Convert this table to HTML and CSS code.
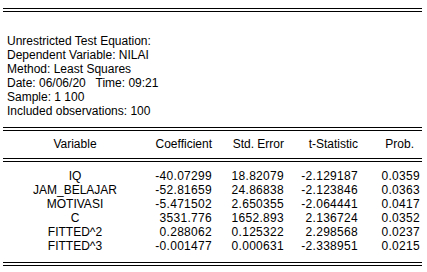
FILE: index.html
```html
<!DOCTYPE html>
<html>
<head>
<meta charset="utf-8">
<link rel="stylesheet" href="styles.css">
</head>
<body>
<div class="page">
  <div class="rule rule-top"></div>
  <div class="info">
    <div>Unrestricted Test Equation:</div>
    <div>Dependent Variable: NILAI</div>
    <div>Method: Least Squares</div>
    <div>Date: 06/06/20&nbsp;&nbsp; Time: 09:21</div>
    <div>Sample: 1 100</div>
    <div>Included observations: 100</div>
  </div>
  <div class="rule rule-table"></div>
  <div class="grid head">
    <div class="var">Variable</div>
    <div class="num">Coefficient</div>
    <div class="num">Std. Error</div>
    <div class="num">t-Statistic</div>
    <div class="num prob-head">Prob.</div>
  </div>
  <div class="rule rule-head"></div>
  <div class="grid body">
    <div class="var">IQ</div><div class="num val">-40.07299</div><div class="num val">18.82079</div><div class="num val">-2.129187</div><div class="num val">0.0359</div>
    <div class="var">JAM_BELAJAR</div><div class="num val">-52.81659</div><div class="num val">24.86838</div><div class="num val">-2.123846</div><div class="num val">0.0363</div>
    <div class="var">MOTIVASI</div><div class="num val">-5.471502</div><div class="num val">2.650355</div><div class="num val">-2.064441</div><div class="num val">0.0417</div>
    <div class="var">C</div><div class="num val">3531.776</div><div class="num val">1652.893</div><div class="num val">2.136724</div><div class="num val">0.0352</div>
    <div class="var">FITTED^2</div><div class="num val">0.288062</div><div class="num val">0.125322</div><div class="num val">2.298568</div><div class="num val">0.0237</div>
    <div class="var">FITTED^3</div><div class="num val">-0.001477</div><div class="num val">0.000631</div><div class="num val">-2.338951</div><div class="num val">0.0215</div>
  </div>
  <div class="rule rule-bottom"></div>
</div>
</body>
</html>
```

FILE: styles.css
```css
html, body {
  margin: 0;
  padding: 0;
  background: #ffffff;
}
body {
  font-family: "Liberation Sans", Arial, sans-serif;
  font-size: 12px;
  line-height: 14px;
  color: #000000;
}
.page {
  width: 419px;
  padding-left: 3px;
  overflow: hidden;
  height: 272px;
}
.rule {
  height: 2px;
  border-top: 1px solid #000;
  border-bottom: 1px solid #000;
}
.rule-top { margin-top: 8px; }
.info {
  margin-top: 22px;
  padding-left: 4px;
  white-space: nowrap;
}
.rule-table { margin-top: 9px; }
.grid {
  display: grid;
  grid-template-columns: 144px 67px 72px 74px 62px;
}
.head { margin-top: 6px; }
.rule-head { margin-top: 7px; }
.body { margin-top: 7px; }
.rule-bottom { margin-top: 9px; }
.var {
  text-align: center;
  white-space: nowrap;
}
.num {
  text-align: right;
  padding-right: 2px;
  white-space: nowrap;
}
.val { letter-spacing: 0.3px; }
.prob-head { padding-right: 8px; }
```
